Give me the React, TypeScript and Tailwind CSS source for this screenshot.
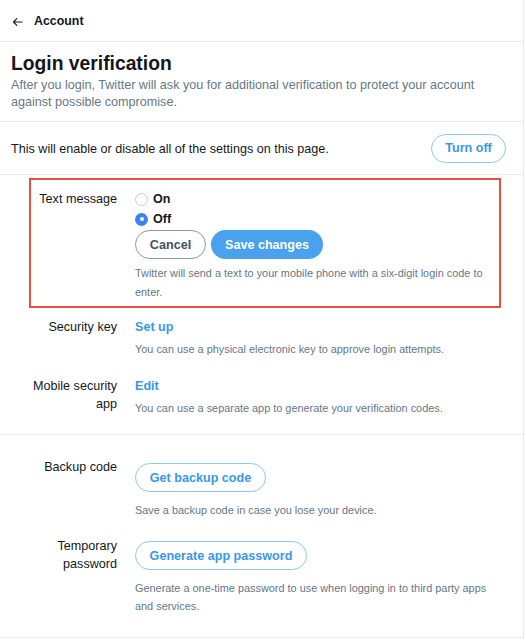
import React from "react";

const font = { fontFamily: '"Liberation Sans", Arial, Helvetica, sans-serif' };

function Row({ label, children, className = "" }: { label: React.ReactNode; children: React.ReactNode; className?: string }) {
  return (
    <div className={`flex gap-[18px] ${className}`}>
      <div className="w-[86px] shrink-0 text-right text-[12.6px] leading-[18px] text-[#14171a]">{label}</div>
      <div className="flex-1 pr-[8px]">{children}</div>
    </div>
  );
}

export default function App() {
  return (
    <div className="min-h-[640px] bg-white" style={font}>
      <div className="w-[524px] border-r border-[#e6ecf0] bg-white">
        {/* Header */}
        <div className="flex h-[42px] items-center border-b border-[#e6ecf0] pl-[12px] pt-[2px]">
          <svg width="11" height="10" viewBox="0 0 11 10" fill="none" stroke="#14171a" strokeWidth="1.1" strokeLinecap="round" strokeLinejoin="round">
            <path d="M10 5H1.5M4.8 1.7L1.5 5l3.3 3.3" />
          </svg>
          <span className="ml-[11px] text-[12.4px] font-bold text-[#14171a]">Account</span>
        </div>

        {/* Title */}
        <div className="border-b border-[#e6ecf0] px-[11px] pt-[8px] pb-[10px]">
          <h1 className="text-[19.3px] font-bold leading-[27px] text-[#14171a]">Login verification</h1>
          <p className="text-[12.6px] leading-[17px] text-[#657786]">
            After you login, Twitter will ask you for additional verification to protect your account against possible compromise.
          </p>
        </div>

        {/* Toggle all */}
        <div className="flex h-[53px] items-center justify-between border-b border-[#e6ecf0] pl-[11px] pr-[17px]">
          <span className="pt-[3px] text-[12.6px] text-[#14171a]">This will enable or disable all of the settings on this page.</span>
          <button className="flex h-[29px] w-[75px] items-center justify-center rounded-full border border-[#8fc7f5] pt-[1px] text-[12.6px] font-bold text-[#3a97e8]">
            Turn off
          </button>
        </div>

        {/* Settings section 1 */}
        <div className="border-b border-[#e6ecf0] pl-[31px] pr-[24px] pt-[5px] pb-[17px]">
          <div className="pt-[9px] pb-[5px] ring-2 ring-[#e8523c]">
            <Row label={<span className="block leading-[20px]">Text message</span>}>
              <label className="flex h-[20px] items-center gap-[5px]">
                <span className="box-border h-[13px] w-[13px] rounded-full border border-[#c9ccd0] bg-white" />
                <span className="text-[12.6px] font-bold text-[#14171a]">On</span>
              </label>
              <label className="flex h-[20px] items-center gap-[5px]">
                <span className="flex h-[13px] w-[13px] items-center justify-center rounded-full bg-[#3b82f6]">
                  <span className="h-[4px] w-[4px] rounded-full bg-white" />
                </span>
                <span className="text-[12.6px] font-bold text-[#14171a]">Off</span>
              </label>
              <div className="mt-[1px] flex gap-[5px]">
                <button className="flex h-[29px] w-[71px] items-center justify-center rounded-full border border-[#8899a6] pt-[1px] text-[12.6px] font-bold text-[#44525f]">
                  Cancel
                </button>
                <button className="flex h-[29px] w-[112px] items-center justify-center rounded-full bg-[#4aa1ec] pt-[1px] text-[12.6px] font-bold text-white">
                  Save changes
                </button>
              </div>
              <p className="mt-[5px] text-[10.9px] leading-[18.5px] text-[#657786]">
                Twitter will send a text to your mobile phone with a six-digit login code to enter.
              </p>
            </Row>
          </div>

          <Row label={<span className="block leading-[20px]">Security key</span>} className="mt-[11px]">
            <div className="text-[12.6px] font-bold leading-[20px] text-[#3a97e8]">Set up</div>
            <p className="mt-[3px] text-[10.9px] leading-[18px] text-[#657786]">
              You can use a physical electronic key to approve login attempts.
            </p>
          </Row>

          <Row label={<span className="block pt-[1px]">Mobile security app</span>} className="mt-[18px]">
            <div className="text-[12.6px] font-bold leading-[20px] text-[#3a97e8]">Edit</div>
            <p className="mt-[3px] text-[10.9px] leading-[18px] text-[#657786]">
              You can use a separate app to generate your verification codes.
            </p>
          </Row>
        </div>

        {/* Settings section 2 */}
        <div className="border-b border-[#e6ecf0] pl-[31px] pr-[24px] pt-[23px] pb-[22px]">
          <Row label="Backup code">
            <button className="mt-[5px] flex h-[29px] w-[131px] items-center justify-center rounded-full border border-[#8fc7f5] pt-[1px] text-[12.6px] font-bold text-[#3a97e8]">
              Get backup code
            </button>
            <p className="mt-[9px] text-[10.9px] leading-[18px] text-[#657786]">
              Save a backup code in case you lose your device.
            </p>
          </Row>

          <Row label="Temporary password" className="mt-[18px]">
            <button className="mt-[4px] flex h-[29px] w-[172px] items-center justify-center rounded-full border border-[#8fc7f5] pt-[1px] text-[12.6px] font-bold text-[#3a97e8]">
              Generate app password
            </button>
            <p className="mt-[9px] text-[10.9px] leading-[18px] text-[#657786]">
              Generate a one-time password to use when logging in to third party apps and services.
            </p>
          </Row>
        </div>
      </div>
    </div>
  );
}
